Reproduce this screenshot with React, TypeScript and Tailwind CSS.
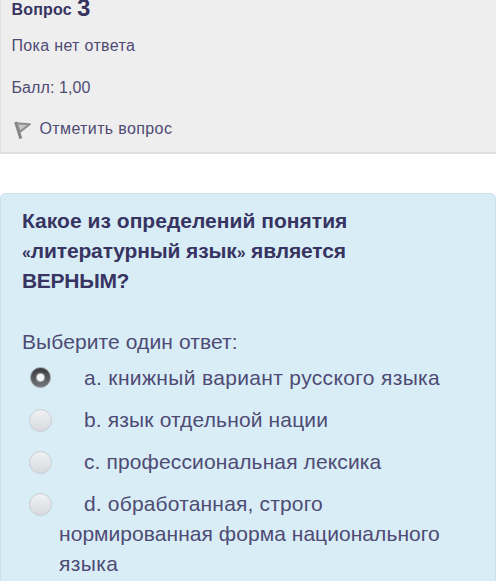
import React from "react";

type Answer = { lines: { text: string; spacing: string }[]; checked?: boolean };

const answers: Answer[] = [
  { lines: [{ text: "a. книжный вариант русского языка", spacing: "tracking-[0.34px]" }], checked: true },
  { lines: [{ text: "b. язык отдельной нации", spacing: "tracking-[0.15px]" }] },
  { lines: [{ text: "c. профессиональная лексика", spacing: "tracking-[0.12px]" }] },
  {
    lines: [
      { text: "d. обработанная, строго", spacing: "tracking-[0.17px]" },
      { text: "нормированная форма национального", spacing: "tracking-[0.05px]" },
      { text: "языка", spacing: "tracking-[0.4px]" },
    ],
  },
];

function Radio({ checked }: { checked?: boolean }) {
  return checked ? (
    <span className="mt-[4px] ml-[8px] flex h-[21px] w-[21px] shrink-0 items-center justify-center rounded-full border border-[#999da2] bg-linear-to-b from-[#393a3d] to-[#74777b]">
      <span className="h-[7px] w-[7px] rounded-full bg-[#f4f5f6] shadow-[0_0_1px_1px_#b5b7b9]" />
    </span>
  ) : (
    <span className="mt-[4px] ml-[7px] mr-[-1px] h-[23px] w-[23px] shrink-0 rounded-full border border-[#c5ced6] bg-linear-to-b from-[#f0f1f3] to-[#d9dadd]" />
  );
}

function Flag() {
  return (
    <svg className="mr-[8px] ml-[2px] h-[22px] w-[18px] shrink-0" viewBox="0 0 18 22" fill="none">
      <path d="M1.6 4 6.8 20.6" stroke="#808183" strokeWidth="2.8" />
      <path d="M2.6 5.2 15.8 6.2 5.8 14Z" fill="#c4c4c5" stroke="#8b8c8e" strokeWidth="2" strokeLinejoin="round" />
    </svg>
  );
}

export default function App() {
  return (
    <main className="flex h-[581px] w-[496px] flex-col overflow-hidden bg-white font-['Liberation_Sans',sans-serif] whitespace-nowrap text-[#4e4b74]">
      <section className="h-[154px] shrink-0 border-b-2 border-l border-[#e0e0e0] bg-[#eeeeee] pl-[10.5px] text-[16px] leading-[20px]">
        <h3 className="flex h-[20px] items-start gap-[5px] font-bold text-[#373462]">
          <span className="text-[16px] leading-[20px] tracking-[0.2px]">Вопрос</span>
          <span className="text-[24px] leading-[16px]">3</span>
        </h3>
        <div className="mt-[16px] tracking-[0.33px]">Пока нет ответа</div>
        <div className="mt-[22px] tracking-[0.1px]">Балл: 1,00</div>
        <div className="mt-[20px] flex items-center">
          <Flag />
          <span className="tracking-[0.37px]">Отметить вопрос</span>
        </div>
      </section>
      <section className="mt-[39px] h-[400px] shrink-0 rounded-t-[5px] border border-[#cbe3ec] bg-[#d9edf7] pt-[12px] pl-[21px] text-[21px] leading-[30px]">
        <h2 className="font-bold text-[#373462]">
          <div className="tracking-[0.03px]">Какое из определений понятия</div>
          <div className="h-[30px] tracking-[-0.14px]">
            <span className="text-[16px] leading-none">«</span>литературный язык<span className="text-[16px] leading-none">»</span> является
          </div>
          <div className="tracking-[-0.3px]">ВЕРНЫМ?</div>
        </h2>
        <div className="mt-[31px] tracking-[0.1px]">Выберите один ответ:</div>
        <div className="mt-[6px] flex flex-col gap-[12px]">
          {answers.map((answer) => (
            <div key={answer.lines[0].text} className="flex items-start">
              <Radio checked={answer.checked} />
              <div className="ml-[8px]">
                {answer.lines.map((line, i) => (
                  <div key={line.text} className={i === 0 ? "pl-[25px]" : ""}>
                    <span className={line.spacing}>{line.text}</span>
                  </div>
                ))}
              </div>
            </div>
          ))}
        </div>
      </section>
    </main>
  );
}
